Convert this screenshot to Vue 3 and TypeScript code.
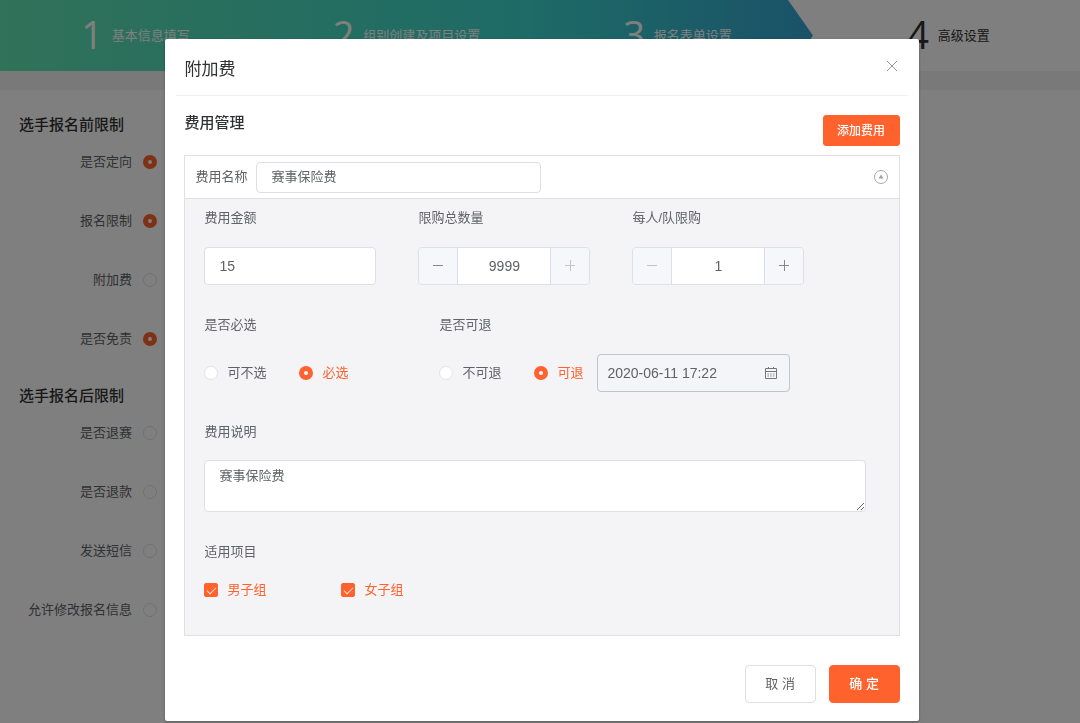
<script setup lang="ts">
import { ref } from 'vue'

interface Step { no: number; title: string; done: boolean }
interface Setting { id: string; label: string; on: boolean }
interface Section { title: string; items: Setting[] }

const steps: Step[] = [
  { no: 1, title: '基本信息填写', done: true },
  { no: 2, title: '组别创建及项目设置', done: true },
  { no: 3, title: '报名表单设置', done: true },
  { no: 4, title: '高级设置', done: false },
]

const sections: Section[] = [
  {
    title: '选手报名前限制',
    items: [
      { id: 'orient', label: '是否定向', on: true },
      { id: 'limit', label: '报名限制', on: true },
      { id: 'extra', label: '附加费', on: false },
      { id: 'waiver', label: '是否免责', on: true },
    ],
  },
  {
    title: '选手报名后限制',
    items: [
      { id: 'quit', label: '是否退赛', on: false },
      { id: 'refund', label: '是否退款', on: false },
      { id: 'sms', label: '发送短信', on: false },
      { id: 'edit', label: '允许修改报名信息', on: false },
    ],
  },
]

const feeName = ref('赛事保险费')
const amount = ref('15')
const total = ref(9999)
const perTeam = ref(1)
const required = ref('yes')
const refundable = ref('yes')
const deadline = ref('2020-06-11 17:22')
const note = ref('赛事保险费')
const groups = ref([
  { id: 'men', label: '男子组', checked: true },
  { id: 'women', label: '女子组', checked: true },
])
</script>

<template>
  <div class="page">
    <ol class="steps">
      <li v-for="s in steps" :key="s.no" class="step" :class="{ done: s.done }">
        <span class="step-no">{{ s.no }}</span>
        <span>{{ s.title }}</span>
      </li>
    </ol>
    <main class="settings">
      <section v-for="sec in sections" :key="sec.title" class="section">
        <h2 class="heading">{{ sec.title }}</h2>
        <div v-for="item in sec.items" :key="item.id" class="setting">
          <label class="setting-label" :for="item.id">{{ item.label }}</label>
          <input :id="item.id" class="radio" type="radio" :name="item.id" :checked="item.on" />
        </div>
      </section>
    </main>
  </div>

  <div class="overlay">
    <div class="dialog" role="dialog" aria-modal="true" aria-labelledby="dialog-title">
      <header class="dialog-head">
        <h1 id="dialog-title" class="dialog-title">附加费</h1>
        <button class="close" type="button" aria-label="关闭">
          <svg width="12" height="12" viewBox="0 0 12 12" fill="none" stroke="#909399"><path d="M1 1l10 10M11 1L1 11" /></svg>
        </button>
      </header>

      <div class="dialog-body">
        <div class="toolbar">
          <h2 class="heading">费用管理</h2>
          <button class="btn primary small" type="button">添加费用</button>
        </div>

        <div class="card">
          <div class="card-head">
            <label for="fee-name">费用名称</label>
            <input id="fee-name" v-model="feeName" class="input name-input" type="text" />
            <button class="collapse" type="button" aria-label="收起">
              <svg width="16" height="16" viewBox="0 0 16 16" fill="none">
                <circle cx="8" cy="8" r="6.5" stroke="#a8a8ab" />
                <path d="M8 5.5L10.5 9.5H5.5z" fill="#a0a0a4" />
              </svg>
            </button>
          </div>

          <div class="card-body">
            <div class="row thirds">
              <div class="field">
                <label for="amount">费用金额</label>
                <input id="amount" v-model="amount" class="input tall" type="text" />
              </div>
              <div class="field">
                <label for="total">限购总数量</label>
                <div class="stepper">
                  <button type="button" aria-label="减少" @click="total--">
                    <svg width="12" height="12" viewBox="0 0 12 12"><path d="M1 5.5h10" /></svg>
                  </button>
                  <input id="total" v-model="total" type="text" />
                  <button type="button" aria-label="增加" disabled>
                    <svg width="12" height="12" viewBox="0 0 12 12"><path d="M1 5.5h10M6.5 0v11" /></svg>
                  </button>
                </div>
              </div>
              <div class="field">
                <label for="per-team">每人/队限购</label>
                <div class="stepper">
                  <button type="button" aria-label="减少" disabled>
                    <svg width="12" height="12" viewBox="0 0 12 12"><path d="M1 5.5h10" /></svg>
                  </button>
                  <input id="per-team" v-model="perTeam" type="text" />
                  <button type="button" aria-label="增加" @click="perTeam++">
                    <svg width="12" height="12" viewBox="0 0 12 12"><path d="M1 5.5h10M6.5 0v11" /></svg>
                  </button>
                </div>
              </div>
            </div>

            <div class="row">
              <div class="field choice" role="radiogroup" aria-labelledby="required-label">
                <span id="required-label">是否必选</span>
                <div class="options">
                  <label class="option"><input v-model="required" class="radio" type="radio" value="no" /><span>可不选</span></label>
                  <label class="option"><input v-model="required" class="radio" type="radio" value="yes" /><span>必选</span></label>
                </div>
              </div>
              <div class="field" role="radiogroup" aria-labelledby="refund-label">
                <span id="refund-label">是否可退</span>
                <div class="options">
                  <label class="option"><input v-model="refundable" class="radio" type="radio" value="no" /><span>不可退</span></label>
                  <label class="option"><input v-model="refundable" class="radio" type="radio" value="yes" /><span>可退</span></label>
                  <div class="date">
                    <input v-model="deadline" type="text" aria-label="可退截止时间" />
                    <svg width="14" height="14" viewBox="0 0 14 14" fill="none" stroke="#77777b">
                      <path d="M1.5 2.5h11v10h-11zM1.5 5.5h11M4.5 1v2M9.5 1v2" />
                      <path d="M3.5 8h7M3.5 10h7" stroke="#8f8f93" stroke-dasharray="1.5 1.2" />
                    </svg>
                  </div>
                </div>
              </div>
            </div>

            <div class="field compact">
              <label for="note">费用说明</label>
              <textarea id="note" v-model="note" class="input note"></textarea>
            </div>

            <div class="field compact" role="group" aria-labelledby="groups-label">
              <span id="groups-label">适用项目</span>
              <div class="checks">
                <label v-for="g in groups" :key="g.id" class="check"><input v-model="g.checked" class="checkbox" type="checkbox" /><span>{{ g.label }}</span></label>
              </div>
            </div>
          </div>
        </div>
      </div>

      <footer class="dialog-foot">
        <button class="btn" type="button">取 消</button>
        <button class="btn primary" type="button">确 定</button>
      </footer>
    </div>
  </div>
</template>

<style>
body {
  margin: 0;
  background: #fff;
}
</style>

<style scoped>
.page,
.overlay {
  font: 13px/20px "Liberation Sans", "Noto Sans CJK SC", sans-serif;
  color: #606266;
}
.page *,
.overlay * {
  box-sizing: border-box;
}
button,
input,
textarea {
  margin: 0;
  font: inherit;
  color: inherit;
  outline: none;
}
button {
  padding: 0;
  cursor: pointer;
}
svg {
  display: block;
}

.page {
  height: 100vh;
  overflow: hidden;
}
.steps {
  position: relative;
  display: grid;
  grid-template-columns: repeat(4, 1fr);
  width: calc(100% + 4px);
  margin: 0;
  padding: 0;
  height: 71px;
  list-style: none;
}
.steps::before {
  content: "";
  position: absolute;
  inset: 0 auto 0 0;
  width: 75%;
  background: linear-gradient(90deg, #62e4b2, #46dac4 45%, #3cd6ce 65%, #34a4d0);
  clip-path: polygon(0 0, calc(100% - 25px) 0, 100% 50%, calc(100% - 25px) 100%, 0 100%);
}
.step {
  position: relative;
  display: flex;
  align-items: center;
  justify-content: center;
  gap: 9px;
  color: #303133;
}
.step.done {
  color: #fff;
}
.step-no {
  font: 38px/40px "Open Sans", "Noto Sans", sans-serif;
  margin-top: -4px;
}
.settings {
  border-top: 19px solid #f3f2f5;
  padding-top: 25px;
}
.heading {
  margin: 0;
  font-size: 15px;
  line-height: 20px;
  font-weight: 500;
  color: #303133;
}
.section {
  margin-bottom: 2px;
}
.section .heading {
  padding-left: 19px;
  margin-bottom: 13px;
}
.setting {
  display: flex;
  align-items: center;
  gap: 11px;
  height: 59px;
  padding-bottom: 31px;
}
.setting-label {
  width: 132px;
  text-align: right;
}

.radio {
  appearance: none;
  flex: none;
  width: 14px;
  height: 14px;
  border: 1px solid #e2e3e8;
  border-radius: 50%;
  background: #fff;
}
.radio:checked {
  border: 5px solid #ff622d;
}

.overlay {
  position: fixed;
  inset: 0;
  overflow: auto;
  padding: 39px 0 0 4px;
  box-sizing: border-box;
  background: rgba(0, 0, 0, 0.5);
}
.dialog {
  width: 70%;
  margin: 0 auto;
  padding: 0 19px 18px;
  background: #fff;
  border-radius: 2px;
  box-shadow: 0 1px 3px rgba(0, 0, 0, 0.3);
}
.dialog-head {
  display: flex;
  align-items: center;
  justify-content: space-between;
  margin: 0 -8px;
  padding: 0 8px 2px;
  height: 57px;
  border-bottom: 1px solid #f0f0f2;
}
.dialog-title {
  margin: 0;
  padding-top: 8px;
  font-size: 17px;
  line-height: 24px;
  font-weight: 400;
  color: #303133;
}
.close,
.collapse {
  border: 0;
  background: none;
}
.close {
  padding: 2px;
}
.toolbar {
  display: flex;
  align-items: flex-start;
  justify-content: space-between;
  padding: 17px 0 9px;
}
.toolbar .btn {
  margin-top: 2px;
}
.btn {
  width: 71px;
  height: 38px;
  border: 1px solid #dcdfe6;
  border-radius: 4px;
  background: #fff;
}
.primary {
  border-color: #ff622d;
  background: #ff622d;
  color: #fff;
  font-weight: 500;
}
.small {
  width: 77px;
  height: 31px;
  font-size: 12px;
  border-radius: 3px;
}

.card {
  border: 1px solid #e0dfe4;
}
.card-head {
  display: flex;
  align-items: center;
  gap: 9px;
  height: 43px;
  padding: 0 10px;
  border-bottom: 1px solid #e0dfe4;
}
.collapse {
  margin-left: auto;
}
.input {
  border: 1px solid #dcdfe6;
  border-radius: 4px;
  padding: 0 14px;
  background: #fff;
}
.name-input {
  width: 41%;
  height: 31px;
  padding-bottom: 3px;
}
.tall {
  height: 38px;
  font-size: 14px;
}
.card-body {
  display: flex;
  flex-direction: column;
  gap: 30px;
  padding: 9px 33px 35px 19px;
  background: #f4f3f6;
}
.row {
  display: flex;
}
.thirds {
  gap: 42px;
}
.field {
  display: flex;
  flex-direction: column;
  gap: 19px;
}
.compact {
  gap: 18px;
}
.thirds .field {
  width: 172px;
}
.stepper {
  display: flex;
  height: 38px;
  border: 1px solid #dcdfe6;
  border-radius: 4px;
  overflow: hidden;
}
.stepper input {
  flex: 1;
  min-width: 0;
  padding: 0;
  border: solid #dcdfe6;
  border-width: 0 1px;
  background: #fff;
  text-align: center;
  font-size: 14px;
}
.stepper button {
  display: grid;
  place-items: center;
  width: 38px;
  border: 0;
  background: #f5f7fa;
}
.stepper svg {
  stroke: #85878c;
}
.stepper button:disabled svg {
  stroke: #c0c4cc;
}
.choice {
  width: 235px;
}
.options {
  display: flex;
  align-items: center;
  height: 38px;
}
.option,
.check {
  display: flex;
  align-items: center;
  gap: 9px;
}
.option:first-child {
  width: 95px;
}
.option:has(:checked),
.check:has(:checked) {
  color: #ff622d;
}
.date {
  display: flex;
  align-items: center;
  width: 193px;
  height: 38px;
  margin-left: 14px;
  padding: 0 11px 0 9px;
  border: 1px solid #c0c4cc;
  border-radius: 4px;
  background: #f4f5f8;
}
.date input {
  flex: 1;
  min-width: 0;
  padding: 0;
  border: 0;
  background: none;
  font-size: 14px;
}
.note {
  width: 100%;
  height: 52px;
  padding: 5px 14px;
  resize: vertical;
}
.checks {
  display: flex;
}
.check {
  width: 137px;
}
.checkbox {
  appearance: none;
  display: grid;
  place-items: center;
  width: 14px;
  height: 14px;
  border: 1px solid #dcdfe6;
  border-radius: 2px;
  background: #fff;
}
.checkbox:checked {
  border-color: #ff622d;
  background: #ff622d;
}
.checkbox:checked::after {
  content: "";
  width: 4px;
  height: 8px;
  margin-bottom: 2px;
  border: solid #ffe0d5;
  border-width: 0 1px 1px 0;
  transform: rotate(45deg);
}
.dialog-foot {
  display: flex;
  justify-content: flex-end;
  gap: 13px;
  padding-top: 29px;
}
</style>
